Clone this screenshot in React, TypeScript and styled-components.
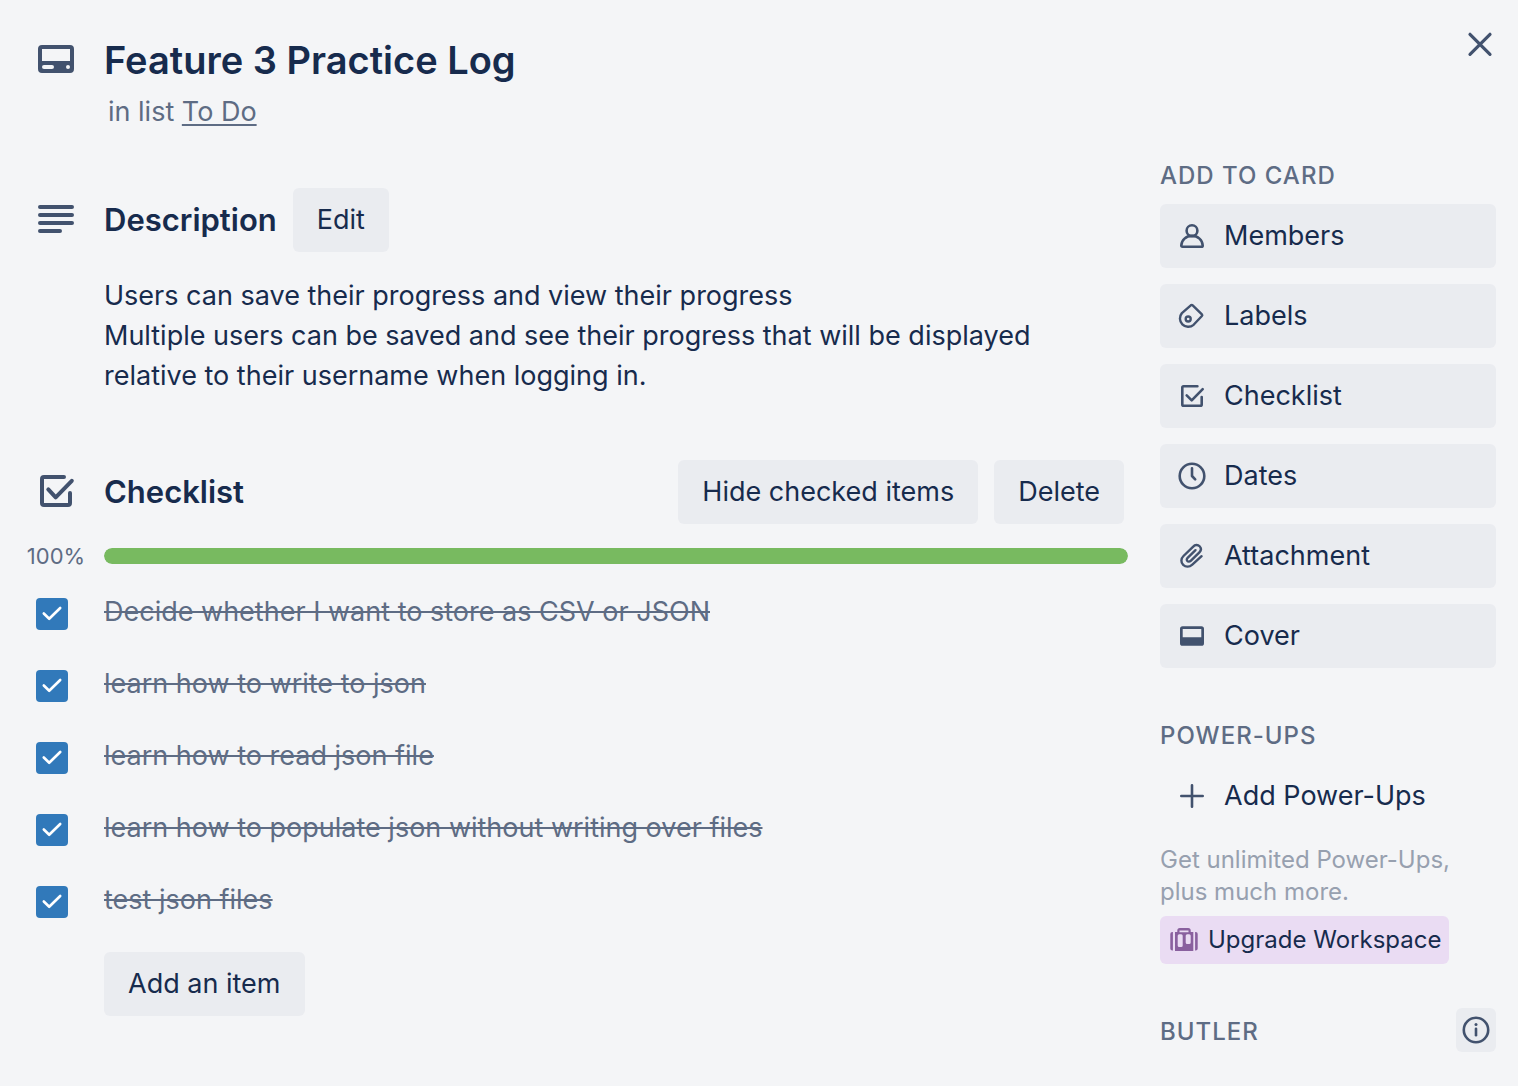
import React, { useState } from "react";
import styled, { createGlobalStyle } from "styled-components";

const color = {
  page: "#f4f5f7",
  text: "#172b4d",
  subtle: "#5e6c84",
  muted: "#97a0af",
  icon: "#42526e",
  button: "#eaecf0",
  green: "#78ba60",
  blue: "#3179ba",
  upgrade: "#eadcf3",
  purple: "#89609e",
};

const GlobalStyle = createGlobalStyle`
  *, *::before, *::after { box-sizing: border-box; }
  body {
    margin: 0;
    background: ${color.page};
    color: ${color.text};
    font-family: Inter, "Liberation Sans", sans-serif;
    font-size: 27px;
    line-height: 40px;
  }
  h1, h2, h3, p, ul { margin: 0; padding: 0; }
  button, input { font: inherit; color: inherit; margin: 0; }
`;

const Page = styled.div`
  padding: 28px 22px 32px 24px;
`;

const Header = styled.header`
  display: flex;
  align-items: flex-start;
  margin-bottom: 24px;
`;

const TitleBlock = styled.div`
  flex: 1;
  padding-top: 8px;
`;

const GutterRow = styled.div`
  display: grid;
  grid-template-columns: 64px minmax(0, 1fr);
  column-gap: 16px;
  align-items: center;
`;

const Gutter = styled.div`
  display: flex;
  justify-content: center;
`;

const Indented = styled.div`
  padding-left: 80px;
`;

const Title = styled.h1`
  font-size: 38px;
  line-height: 48px;
  font-weight: 600;
`;

const InList = styled.p`
  margin-top: 8px;
  padding-left: 4px;
  color: ${color.subtle};
`;

const ListLink = styled.a`
  color: inherit;
  text-decoration: underline;
  text-decoration-thickness: 2px;
  text-underline-offset: 3px;
`;

const CloseButton = styled.button`
  display: flex;
  padding: 0;
  border: 0;
  background: none;
  cursor: pointer;
`;

const Columns = styled.div`
  display: grid;
  grid-template-columns: minmax(0, 1fr) 336px;
  column-gap: 32px;
`;

const Main = styled.main`
  padding-top: 32px;
`;

const Section = styled.section`
  & + & {
    margin-top: 64px;
  }
`;

const HeadingLine = styled.div`
  display: flex;
  align-items: center;
  gap: 16px;
  padding-right: 4px;
`;

const SectionTitle = styled.h2<{ $grow?: boolean }>`
  flex: ${(p) => (p.$grow ? "1" : "none")};
  font-size: 31px;
  line-height: 40px;
  font-weight: 600;
`;

const Button = styled.button`
  height: 64px;
  padding: 0 24px;
  border: 0;
  border-radius: 6px;
  background: ${color.button};
  white-space: nowrap;
  cursor: pointer;
`;

const Description = styled.p`
  margin-top: 24px;
  padding-right: 40px;
`;

const ProgressRow = styled(GutterRow)`
  margin-top: 20px;
`;

const Percent = styled.span`
  font-size: 22px;
  line-height: 24px;
  color: ${color.subtle};
`;

const Track = styled.div`
  height: 16px;
  border-radius: 8px;
  background: ${color.button};
  overflow: hidden;
`;

const Fill = styled.div`
  height: 100%;
  border-radius: 8px;
  background: ${color.green};
`;

const Items = styled.ul`
  display: grid;
  row-gap: 32px;
  margin: 24px 0 32px;
  list-style: none;
`;

const Item = styled.li`
  display: grid;
  grid-template-columns: 64px minmax(0, 1fr);
  column-gap: 16px;
  align-items: start;
`;

const CheckCell = styled.span`
  display: grid;
  justify-content: start;
  padding: 6px 0 0 12px;

  & > * {
    grid-area: 1 / 1;
  }

  svg {
    pointer-events: none;
  }
`;

const Checkbox = styled.input`
  appearance: none;
  width: 32px;
  height: 32px;
  border-radius: 4px;
  background: #fff;
  box-shadow: inset 0 0 0 2px #dfe1e6;
  cursor: pointer;

  &:checked {
    background: ${color.blue};
    box-shadow: none;
  }
`;

const ItemLabel = styled.label<{ $done: boolean }>`
  justify-self: start;
  color: ${(p) => (p.$done ? color.subtle : color.text)};
  text-decoration: ${(p) => (p.$done ? "line-through 2px" : "none")};
`;

const Sidebar = styled.aside`
  display: flex;
  flex-direction: column;
`;

const SideSection = styled.section`
  & + & {
    margin-top: 48px;
  }
`;

const SideTitle = styled.h3`
  font-size: 24px;
  line-height: 40px;
  font-weight: 500;
  letter-spacing: 1px;
  text-transform: uppercase;
  color: ${color.subtle};
`;

const SideList = styled.div`
  display: grid;
  row-gap: 16px;
  margin-top: 8px;
`;

const SideButton = styled.button<{ $plain?: boolean }>`
  display: flex;
  align-items: center;
  gap: 16px;
  height: 64px;
  padding: 0 16px;
  border: 0;
  border-radius: 6px;
  background: ${(p) => (p.$plain ? "transparent" : color.button)};
  text-align: left;
  cursor: pointer;
`;

const Note = styled.p`
  margin: 16px 0 8px;
  font-size: 24px;
  line-height: 32px;
  color: ${color.muted};
`;

const UpgradeButton = styled.button`
  display: inline-flex;
  align-items: center;
  gap: 8px;
  height: 48px;
  padding: 0 8px;
  border: 0;
  border-radius: 6px;
  background: ${color.upgrade};
  font-size: 24px;
  white-space: nowrap;
  vertical-align: top;
  cursor: pointer;
`;

const ButlerRow = styled.div`
  display: flex;
  align-items: flex-end;
  justify-content: space-between;
  margin-top: 44px;
`;

const InfoButton = styled.button`
  display: flex;
  align-items: center;
  justify-content: center;
  width: 40px;
  height: 44px;
  padding: 0;
  border: 0;
  border-radius: 6px;
  background: ${color.button};
  cursor: pointer;
`;

const LineIcon = styled.svg<{ $weight: number }>`
  flex: none;
  fill: none;
  stroke: ${color.icon};
  stroke-width: ${(p) => p.$weight};
  stroke-linecap: round;
  stroke-linejoin: round;
`;

type IconProps = { weight?: number; children: React.ReactNode };

const Icon40 = ({ weight = 4, children }: IconProps) => (
  <LineIcon $weight={weight} width="40" height="40" viewBox="0 0 40 40" aria-hidden="true">
    {children}
  </LineIcon>
);

const Icon32 = ({ weight = 2.6, children }: IconProps) => (
  <LineIcon $weight={weight} width="32" height="32" viewBox="0 0 32 32" aria-hidden="true">
    {children}
  </LineIcon>
);

const CardIcon = () => (
  <Icon40>
    <path
      fill={color.icon}
      stroke="none"
      fillRule="evenodd"
      d="M6 5h28a4 4 0 0 1 4 4v20a4 4 0 0 1-4 4H6a4 4 0 0 1-4-4V9a4 4 0 0 1 4-4zM6 9v12h28V9zM8 25a2 2 0 0 0 0 4h8a2 2 0 0 0 0-4zM32 25a2 2 0 1 0 0 4a2 2 0 0 0 0-4z"
    />
  </Icon40>
);

const TextIcon = () => (
  <Icon40>
    <path d="M4 7h32M4 15h32M4 23h32M4 31h20" />
  </Icon40>
);

const BigCheckIcon = () => (
  <Icon40>
    <path d="M28 5H8a2 2 0 0 0-2 2v24a2 2 0 0 0 2 2h24a2 2 0 0 0 2-2V21" />
    <path d="M12.3 17.4l7.4 8L35.8 8.8" />
  </Icon40>
);

const MemberIcon = () => (
  <Icon32>
    <circle cx="16" cy="10.7" r="5.4" />
    <path d="M5.3 25.4C5.6 20 10 15.9 16 15.9S26.4 20 26.7 25.4c0 .8-.4 1.3-1.2 1.3h-19c-.8 0-1.2-.5-1.2-1.3z" />
  </Icon32>
);

const LabelIcon = () => (
  <Icon32 weight={2.4}>
    <path d="M14.8 5.3L5.9 13.1A8.3 8.3 0 0 0 17.6 24.8l8.3-8.8q.8-.8 0-1.6l-9.2-9.1q-.9-.8-1.9 0z" />
    <circle cx="12.2" cy="19" r="2.5" />
  </Icon32>
);

const CheckIcon = () => (
  <Icon32>
    <path d="M21.4 6.3H7.6a1.3 1.3 0 0 0-1.3 1.3v16.8a1.3 1.3 0 0 0 1.3 1.3h16.8a1.3 1.3 0 0 0 1.3-1.3v-7.4" />
    <path d="M10.7 15.4l5 5L26.7 9.1" />
  </Icon32>
);

const ClockIcon = () => (
  <Icon32>
    <circle cx="16" cy="16" r="12.3" />
    <path d="M16 8.2v7.8l3.2 3.4" />
  </Icon32>
);

const ClipIcon = () => (
  <Icon32 weight={2.4}>
    <path d="M25.6 16.2L16.3 24.6c-3 2.7-6.7 2.5-9.1.3-2.5-2.5-2.4-6.3.3-8.9l9.7-9.4c1.8-2 4.8-2 6.4-.3 1.7 1.8 1.6 4.2-.2 6l-8.7 8.5c-1.1 1.1-2.7 1-3.4.2-.8-.8-.7-2.2.3-3.2l7.9-7.6" />
  </Icon32>
);

const CoverIcon = () => (
  <Icon32>
    <path
      fill={color.icon}
      stroke="none"
      fillRule="evenodd"
      d="M6.6 6.2h18.8A2.6 2.6 0 0 1 28 8.8v14.4a2.6 2.6 0 0 1-2.6 2.6H6.6A2.6 2.6 0 0 1 4 23.2V8.8a2.6 2.6 0 0 1 2.6-2.6zM6.7 8.9v8.3h18.6V8.9z"
    />
  </Icon32>
);

const PlusIcon = () => (
  <Icon32>
    <path d="M16 5.3v21.4M5.3 16h21.4" />
  </Icon32>
);

const CloseIcon = () => (
  <Icon32 weight={3.2}>
    <path d="M6 6.3l20 20M26 6.3l-20 20" />
  </Icon32>
);

const InfoIcon = () => (
  <Icon32>
    <circle cx="16" cy="16" r="12.2" />
    <path d="M16 14.8v6.4" />
    <circle cx="16" cy="10.5" r="1.5" fill={color.icon} stroke="none" />
  </Icon32>
);

const SuitcaseIcon = () => (
  <svg width="32" height="32" viewBox="0 0 32 32" fill={color.purple} aria-hidden="true">
    <path d="M4.9 8v18.6H4.3a2 2 0 0 1-2-2V10a2 2 0 0 1 2-2zM27.1 8h.6a2 2 0 0 1 2 2v14.6a2 2 0 0 1-2 2h-.6z" />
    <path
      fillRule="evenodd"
      d="M7 8h2.3V6.5A2.5 2.5 0 0 1 11.800 4h8.4a2.5 2.5 0 0 1 2.5 2.5V8H25.300v19H7zM11.500 8.200h9V6.600h-9zM11.200 10.300a1.500 1.500 0 0 0-1.500 1.500v9.700a1.500 1.500 0 0 0 1.500 1.500h2a1.500 1.500 0 0 0 1.500-1.500v-9.700a1.500 1.500 0 0 0-1.500-1.500zM19.200 10.300a1.500 1.500 0 0 0-1.500 1.500v6.700a1.500 1.500 0 0 0 1.500 1.500h2a1.500 1.500 0 0 0 1.500-1.500v-6.700a1.500 1.500 0 0 0-1.500-1.500z"
    />
  </svg>
);

const Tick = () => (
  <svg width="32" height="32" viewBox="0 0 32 32" fill="none" stroke="#fff" strokeWidth="2.6" strokeLinecap="round" strokeLinejoin="round" aria-hidden="true">
    <path d="M7.8 15.5l5.4 5.3L24.2 10" />
  </svg>
);

const cardActions = [
  { label: "Members", icon: <MemberIcon /> },
  { label: "Labels", icon: <LabelIcon /> },
  { label: "Checklist", icon: <CheckIcon /> },
  { label: "Dates", icon: <ClockIcon /> },
  { label: "Attachment", icon: <ClipIcon /> },
  { label: "Cover", icon: <CoverIcon /> },
];

const initialItems = [
  "Decide whether I want to store as CSV or JSON",
  "learn how to write to json",
  "learn how to read json file",
  "learn how to populate json without writing over files",
  "test json files",
].map((text) => ({ text, done: true }));

export default function App() {
  const [items, setItems] = useState(initialItems);
  const percent = Math.round((items.filter((i) => i.done).length / items.length) * 100);
  const toggle = (index: number) =>
    setItems(items.map((item, i) => (i === index ? { ...item, done: !item.done } : item)));

  return (
    <Page>
      <GlobalStyle />
      <Header>
        <TitleBlock>
          <GutterRow>
            <Gutter><CardIcon /></Gutter>
            <Title>Feature 3 Practice Log</Title>
          </GutterRow>
          <Indented>
            <InList>in list <ListLink href="#todo">To Do</ListLink></InList>
          </Indented>
        </TitleBlock>
        <CloseButton type="button" aria-label="Close"><CloseIcon /></CloseButton>
      </Header>

      <Columns>
        <Main>
          <Section>
            <GutterRow>
              <Gutter><TextIcon /></Gutter>
              <HeadingLine>
                <SectionTitle>Description</SectionTitle>
                <Button type="button">Edit</Button>
              </HeadingLine>
            </GutterRow>
            <Indented>
              <Description>
                Users can save their progress and view their progress
                <br />
                Multiple users can be saved and see their progress that will be displayed relative to their username when logging in.
              </Description>
            </Indented>
          </Section>

          <Section>
            <GutterRow>
              <Gutter><BigCheckIcon /></Gutter>
              <HeadingLine>
                <SectionTitle $grow>Checklist</SectionTitle>
                <Button type="button">Hide checked items</Button>
                <Button type="button">Delete</Button>
              </HeadingLine>
            </GutterRow>
            <ProgressRow>
              <Gutter><Percent>{percent}%</Percent></Gutter>
              <Track><Fill style={{ width: `${percent}%` }} /></Track>
            </ProgressRow>
            <Items>
              {items.map((item, index) => (
                <Item key={item.text}>
                  <CheckCell>
                    <Checkbox type="checkbox" id={`item-${index}`} checked={item.done} onChange={() => toggle(index)} />
                    {item.done && <Tick />}
                  </CheckCell>
                  <ItemLabel htmlFor={`item-${index}`} $done={item.done}>{item.text}</ItemLabel>
                </Item>
              ))}
            </Items>
            <Indented>
              <Button type="button">Add an item</Button>
            </Indented>
          </Section>
        </Main>

        <Sidebar>
          <SideSection>
            <SideTitle>Add to card</SideTitle>
            <SideList>
              {cardActions.map(({ label, icon }) => (
                <SideButton type="button" key={label}>{icon}{label}</SideButton>
              ))}
            </SideList>
          </SideSection>
          <SideSection>
            <SideTitle>Power-Ups</SideTitle>
            <SideList>
              <SideButton type="button" $plain><PlusIcon />Add Power-Ups</SideButton>
            </SideList>
            <Note>Get unlimited Power-Ups, plus much more.</Note>
            <UpgradeButton type="button"><SuitcaseIcon />Upgrade Workspace</UpgradeButton>
          </SideSection>
          <ButlerRow>
            <SideTitle>Butler</SideTitle>
            <InfoButton type="button" aria-label="About Butler"><InfoIcon /></InfoButton>
          </ButlerRow>
        </Sidebar>
      </Columns>
    </Page>
  );
}
